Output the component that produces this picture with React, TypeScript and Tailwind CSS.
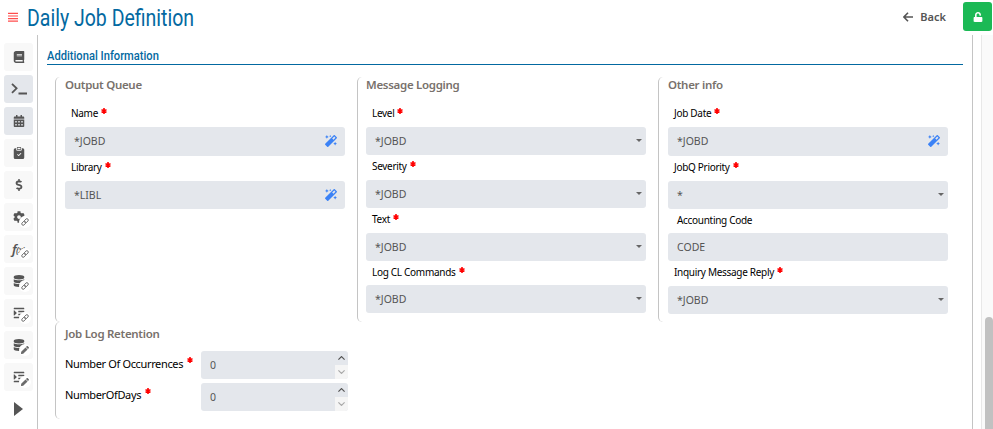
import React from "react";
import { FaCalendarAlt, FaDollarSign, FaCog, FaDatabase, FaIndent, FaBook, FaPen, FaUnlock, FaMagic } from "react-icons/fa";
import { BsClipboardCheckFill } from "react-icons/bs";

type Badge = "link" | "pen";

function SideButton({ children, active, badge }: { children: React.ReactNode; active?: boolean; badge?: Badge }) {
  return (
    <div className={`relative flex h-7 w-[29px] items-center justify-center rounded-[3px] text-[#555555] ${active ? "bg-[#e4e7ec]" : "bg-[#f8f8f8]"}`}>
      {children}
      {badge && (
        <span className="absolute left-[15px] top-[13px] flex h-3 w-3 items-center justify-center rounded-full bg-white">
          {badge === "link" ? (
            <svg width="8" height="8" viewBox="0 0 8 8" fill="none" stroke="#666" strokeWidth="0.9">
              <rect x="-2.2" y="-1.4" width="4.6" height="2.8" rx="1.4" transform="translate(2.7 5.3) rotate(-45)" />
              <rect x="-2.2" y="-1.4" width="4.6" height="2.8" rx="1.4" transform="translate(5.2 2.8) rotate(-45)" />
            </svg>
          ) : (
            <FaPen size={8} className="text-[#6b6b6b]" />
          )}
        </span>
      )}
    </div>
  );
}

function Star({ className = "" }: { className?: string }) {
  return (
    <svg width="6" height="6" viewBox="0 0 6 6" stroke="#ff0000" strokeWidth="1.6" className={className}>
      <path d="M3 0v6M.5 1.6l5 2.8M5.5 1.6l-5 2.8" />
    </svg>
  );
}

type FieldProps = {
  label: string;
  value: string;
  kind?: "wand" | "select" | "text";
  labelH?: string;
  inputH?: string;
};

function Field({ label, value, kind = "select", labelH = "h-[25px] pb-[3px]", inputH = "h-7" }: FieldProps) {
  return (
    <div>
      <div className={`flex items-center text-[10px] tracking-[-0.3px] text-black ${labelH} ${kind === "text" ? "pl-[9px]" : "pl-1.5"}`}>
        <span className="leading-[14px]">{label}</span>
        {kind !== "text" && <Star className="mb-[5px] ml-[3px]" />}
      </div>
      <div className={`flex w-[280px] items-center justify-between rounded-[3px] bg-[#e4e7ec] pl-[9px] text-[10.5px] text-[#555555] ${inputH}`}>
        <span className="leading-[14px]">{value}</span>
        {kind === "wand" && <FaMagic size={12} className="mr-2 text-[#3b82f6]" />}
        {kind === "select" && (
          <svg width="6" height="3" viewBox="0 0 6 3" className="mb-[2px] mr-1">
            <path d="M0 0h6L3 3z" fill="#666" />
          </svg>
        )}
      </div>
    </div>
  );
}

function Group({ title, className, children }: { title: string; className: string; children: React.ReactNode }) {
  return (
    <section className={`rounded-[5px] border-l border-[#c4c4c4] ${className}`}>
      <h3 className="h-4 text-[11.5px] font-semibold leading-4 tracking-[-0.3px] text-[#78716c]">{title}</h3>
      {children}
    </section>
  );
}

function Spinner({ label, labelPad }: { label: string; labelPad: string }) {
  return (
    <div className="flex h-7">
      <div className={`flex w-[136px] items-center text-[11px] tracking-[-0.36px] text-black ${labelPad}`}>
        <span className="leading-4">{label}</span>
        <Star className="mb-[8px] ml-1" />
      </div>
      <div className="flex w-[147px] justify-between overflow-hidden rounded-[3px] bg-[#e4e7ec] pl-[9px] text-[10.5px] text-[#555555]">
        <span className="leading-7">0</span>
        <div className="flex w-[13px] flex-col">
          <div className="flex h-3.5 items-center justify-center">
            <svg width="7" height="4" viewBox="0 0 7 4" fill="none" stroke="#555" strokeWidth="1.2"><path d="M.4 3.6 3.5.6l3.1 3" /></svg>
          </div>
          <div className="flex h-3.5 items-center justify-center bg-[#f5f5f5]">
            <svg width="7" height="4" viewBox="0 0 7 4" fill="none" stroke="#aaa" strokeWidth="1.2"><path d="M.4.4l3.1 3 3.1-3" /></svg>
          </div>
        </div>
      </div>
    </div>
  );
}

export default function App() {
  return (
    <div className="flex h-[429px] w-[993px] flex-col overflow-hidden bg-white font-['Noto_Sans','Open_Sans',sans-serif]">
      <header className="flex h-[35px] shrink-0 items-start">
        <svg width="10" height="10" viewBox="0 0 10 10" className="ml-2 mt-3 shrink-0" stroke="#ff4d4d" strokeWidth="1.2"><path d="M0 1.4h10M0 4h10M0 6.6h10M0 9.2h10" /></svg>
        <h1 className="ml-[9px] mt-px w-[300px] origin-left scale-x-[0.848] whitespace-nowrap font-[Roboto,sans-serif] text-[23px] leading-9 text-[#0369a1]">Daily Job Definition</h1>
        <div className="ml-auto mt-[9px] flex items-center text-[11px] font-semibold leading-4 text-[#555555]">
          <svg width="10" height="10" viewBox="0 0 10 10" className="mr-[7px]" fill="none" stroke="#555" strokeWidth="1.6"><path d="M10 5H1.2M5 .8.9 5 5 9.2" /></svg>
          Back
        </div>
        <div className="ml-[17px] mr-px mt-0.5 flex h-[29px] w-[29px] items-center justify-center rounded-[3px] bg-[#1bb955] text-white"><FaUnlock size={10} /></div>
      </header>
      <div className="flex min-h-0 flex-1">
        <nav className="flex w-[37px] shrink-0 flex-col gap-1 pl-1 pt-2">
          <SideButton><FaBook size={12} /></SideButton>
          <SideButton active>
            <svg width="16" height="12" viewBox="0 0 16 12" fill="none" stroke="#555" strokeWidth="1.8"><path d="M1 .8 5.6 5.3 1 9.8M7.5 10.5H16" /></svg>
          </SideButton>
          <SideButton active><FaCalendarAlt size={12} /></SideButton>
          <SideButton><BsClipboardCheckFill size={12} /></SideButton>
          <SideButton><FaDollarSign size={12} /></SideButton>
          <SideButton badge="link"><FaCog size={12} /></SideButton>
          <SideButton badge="link">
            <span className="flex items-center whitespace-nowrap font-['Noto_Sans',sans-serif] font-semibold italic leading-none tracking-[-0.5px]">
              <span className="text-[13px] leading-none">f</span><span className="text-[9px] leading-none">(x)</span>
            </span>
          </SideButton>
          <SideButton badge="link"><FaDatabase size={12} /></SideButton>
          <SideButton badge="link"><FaIndent size={12} /></SideButton>
          <SideButton badge="pen"><FaDatabase size={12} /></SideButton>
          <SideButton badge="pen"><FaIndent size={12} /></SideButton>
          <svg width="9" height="14" viewBox="0 0 9 14" className="ml-[10px] mt-[7px]"><path d="M0 0 9 7 0 14z" fill="#555" /></svg>
        </nav>
        <main className="w-[936px] shrink-0 border-x border-[#c4c4c4] pl-[9px] pr-[9px] pt-[13px]">
          <div className="h-[17px] border-b border-[#0369a1]">
            <h2 className="w-[200px] origin-left scale-x-[0.892] whitespace-nowrap font-[Roboto,sans-serif] text-[12.5px] font-medium leading-4 text-[#0369a1]">Additional Information</h2>
          </div>
          <div className="ml-2 mt-3 flex">
            <Group title="Output Queue" className="h-[245px] w-[302px] pl-[9px]">
              <Field label="Name" value="*JOBD" kind="wand" labelH="h-[34px] pt-[6px]" inputH="h-[29px] pb-px" />
              <Field label="Library" value="*LIBL" kind="wand" />
            </Group>
            <Group title="Message Logging" className="h-[245px] w-[301px] pl-2">
              <Field label="Level" value="*JOBD" labelH="h-[34px] pt-[6px]" />
              <Field label="Severity" value="*JOBD" />
              <Field label="Text" value="*JOBD" />
              <Field label="Log CL Commands" value="*JOBD" labelH="h-6 pb-0.5" />
            </Group>
            <Group title="Other info" className="h-[245px] w-[300px] pl-[9px]">
              <Field label="Job Date" value="*JOBD" kind="wand" labelH="h-[34px] pt-[6px]" inputH="h-[29px] pb-px" />
              <Field label="JobQ Priority" value="*" />
              <Field label="Accounting Code" value="CODE" kind="text" labelH="h-6 pb-0.5" />
              <Field label="Inquiry Message Reply" value="*JOBD" />
            </Group>
          </div>
          <div className="ml-2">
            <Group title="Job Log Retention" className="h-[97px] w-[302px] pl-[9px] pt-1">
              <div className="mt-[9px] flex flex-col gap-1">
                <Spinner label="Number Of Occurrences" labelPad="pb-[3px]" />
                <Spinner label="NumberOfDays" labelPad="pb-[5px]" />
              </div>
            </Group>
          </div>
        </main>
        <div className="ml-2 flex flex-1 flex-col items-end border-l border-[#e8e8e8] bg-[#fafafa]">
          <div className="mt-[282px] w-2 flex-1 rounded-t-[4px] bg-[#c1c1c1]" />
        </div>
      </div>
    </div>
  );
}
